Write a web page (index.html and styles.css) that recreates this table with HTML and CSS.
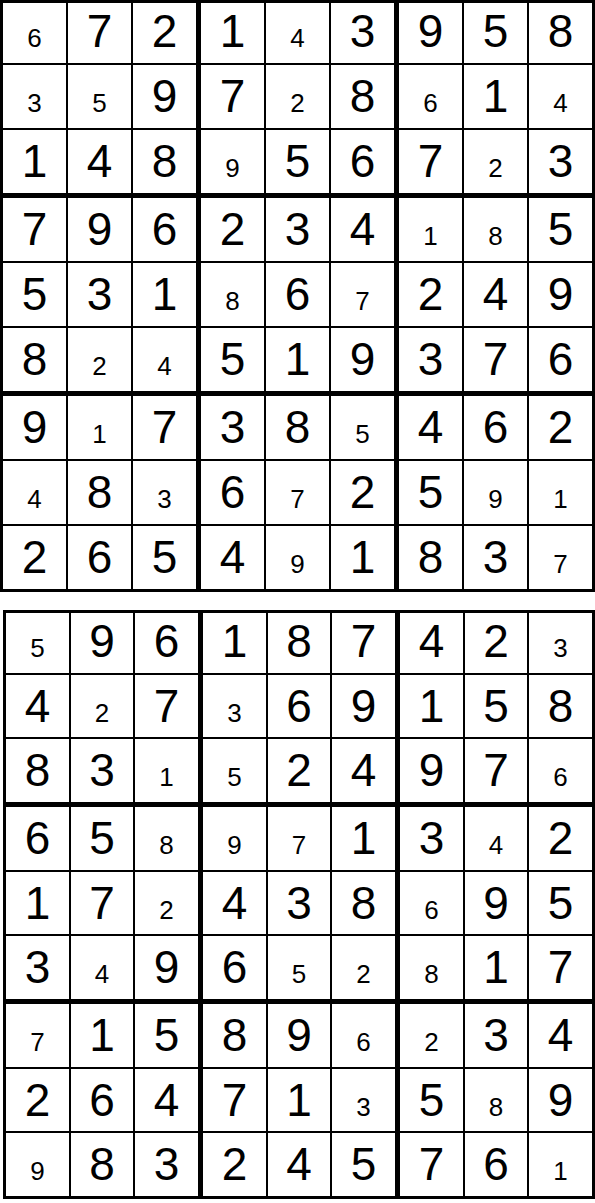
FILE: index.html
```html
<!DOCTYPE html>
<html>
<head>
<meta charset="utf-8">
<link rel="stylesheet" href="styles.css">
</head>
<body>
<div class="page">
  <div class="sudoku">
    <div class="box top"><div class="c"><span class="s">6</span></div><div class="c">7</div><div class="c">2</div><div class="c"><span class="s">3</span></div><div class="c"><span class="s">5</span></div><div class="c">9</div><div class="c">1</div><div class="c">4</div><div class="c">8</div></div>
    <div class="box top"><div class="c">1</div><div class="c"><span class="s">4</span></div><div class="c">3</div><div class="c">7</div><div class="c"><span class="s">2</span></div><div class="c">8</div><div class="c"><span class="s">9</span></div><div class="c">5</div><div class="c">6</div></div>
    <div class="box top"><div class="c">9</div><div class="c">5</div><div class="c">8</div><div class="c"><span class="s">6</span></div><div class="c">1</div><div class="c"><span class="s">4</span></div><div class="c">7</div><div class="c"><span class="s">2</span></div><div class="c">3</div></div>
    <div class="box"><div class="c">7</div><div class="c">9</div><div class="c">6</div><div class="c">5</div><div class="c">3</div><div class="c">1</div><div class="c">8</div><div class="c"><span class="s">2</span></div><div class="c"><span class="s">4</span></div></div>
    <div class="box"><div class="c">2</div><div class="c">3</div><div class="c">4</div><div class="c"><span class="s">8</span></div><div class="c">6</div><div class="c"><span class="s">7</span></div><div class="c">5</div><div class="c">1</div><div class="c">9</div></div>
    <div class="box"><div class="c"><span class="s">1</span></div><div class="c"><span class="s">8</span></div><div class="c">5</div><div class="c">2</div><div class="c">4</div><div class="c">9</div><div class="c">3</div><div class="c">7</div><div class="c">6</div></div>
    <div class="box"><div class="c">9</div><div class="c"><span class="s">1</span></div><div class="c">7</div><div class="c"><span class="s">4</span></div><div class="c">8</div><div class="c"><span class="s">3</span></div><div class="c">2</div><div class="c">6</div><div class="c">5</div></div>
    <div class="box"><div class="c">3</div><div class="c">8</div><div class="c"><span class="s">5</span></div><div class="c">6</div><div class="c"><span class="s">7</span></div><div class="c">2</div><div class="c">4</div><div class="c"><span class="s">9</span></div><div class="c">1</div></div>
    <div class="box"><div class="c">4</div><div class="c">6</div><div class="c">2</div><div class="c">5</div><div class="c"><span class="s">9</span></div><div class="c"><span class="s">1</span></div><div class="c">8</div><div class="c">3</div><div class="c"><span class="s">7</span></div></div>
  </div>

  <div class="sudoku second">
    <div class="box top"><div class="c"><span class="s">5</span></div><div class="c">9</div><div class="c">6</div><div class="c">4</div><div class="c"><span class="s">2</span></div><div class="c">7</div><div class="c">8</div><div class="c">3</div><div class="c"><span class="s">1</span></div></div>
    <div class="box top"><div class="c">1</div><div class="c">8</div><div class="c">7</div><div class="c"><span class="s">3</span></div><div class="c">6</div><div class="c">9</div><div class="c"><span class="s">5</span></div><div class="c">2</div><div class="c">4</div></div>
    <div class="box top"><div class="c">4</div><div class="c">2</div><div class="c"><span class="s">3</span></div><div class="c">1</div><div class="c">5</div><div class="c">8</div><div class="c">9</div><div class="c">7</div><div class="c"><span class="s">6</span></div></div>
    <div class="box"><div class="c">6</div><div class="c">5</div><div class="c"><span class="s">8</span></div><div class="c">1</div><div class="c">7</div><div class="c"><span class="s">2</span></div><div class="c">3</div><div class="c"><span class="s">4</span></div><div class="c">9</div></div>
    <div class="box"><div class="c"><span class="s">9</span></div><div class="c"><span class="s">7</span></div><div class="c">1</div><div class="c">4</div><div class="c">3</div><div class="c">8</div><div class="c">6</div><div class="c"><span class="s">5</span></div><div class="c"><span class="s">2</span></div></div>
    <div class="box"><div class="c">3</div><div class="c"><span class="s">4</span></div><div class="c">2</div><div class="c"><span class="s">6</span></div><div class="c">9</div><div class="c">5</div><div class="c"><span class="s">8</span></div><div class="c">1</div><div class="c">7</div></div>
    <div class="box"><div class="c"><span class="s">7</span></div><div class="c">1</div><div class="c">5</div><div class="c">2</div><div class="c">6</div><div class="c">4</div><div class="c"><span class="s">9</span></div><div class="c">8</div><div class="c">3</div></div>
    <div class="box"><div class="c">8</div><div class="c">9</div><div class="c"><span class="s">6</span></div><div class="c">7</div><div class="c">1</div><div class="c"><span class="s">3</span></div><div class="c">2</div><div class="c">4</div><div class="c">5</div></div>
    <div class="box"><div class="c"><span class="s">2</span></div><div class="c">3</div><div class="c">4</div><div class="c">5</div><div class="c"><span class="s">8</span></div><div class="c">9</div><div class="c">7</div><div class="c">6</div><div class="c"><span class="s">1</span></div></div>
  </div>
</div>
</body>
</html>
```

FILE: styles.css
```css
html, body {
  margin: 0;
  padding: 0;
  background: #ffffff;
}

.page {
  width: 595px;
  display: flex;
  flex-direction: column;
  gap: 18px;
}

.sudoku {
  display: grid;
  grid-template-columns: repeat(3, auto);
  grid-template-rows: 190px 193px 193px;
  gap: 5px;
  padding: 3px;
  width: max-content;
  background: #000000;
  font-family: "Liberation Sans", Arial, Helvetica, sans-serif;
  color: #000000;
}

.box {
  display: grid;
  grid-template-columns: repeat(3, 63px);
  grid-template-rows: repeat(3, 63px);
  gap: 2px;
}

.box.top {
  grid-template-rows: 60px 63px 63px;
}

.c {
  background: #ffffff;
  font-size: 46px;
  line-height: 63px;
  text-align: center;
  overflow: hidden;
}

.box.top .c:nth-child(-n+3) {
  line-height: 57px;
}

.s {
  font-size: 26px;
  line-height: 0;
}

/* second puzzle is drawn ~3px narrower and shorter */
.sudoku.second {
  margin-left: 3px;
  grid-template-rows: 189px 192px 192px;
}

.second .box {
  grid-template-columns: 63px 62px 63px;
  grid-template-rows: 63px 62px 63px;
}

.second .box.top {
  grid-template-rows: 60px 62px 63px;
}
```
